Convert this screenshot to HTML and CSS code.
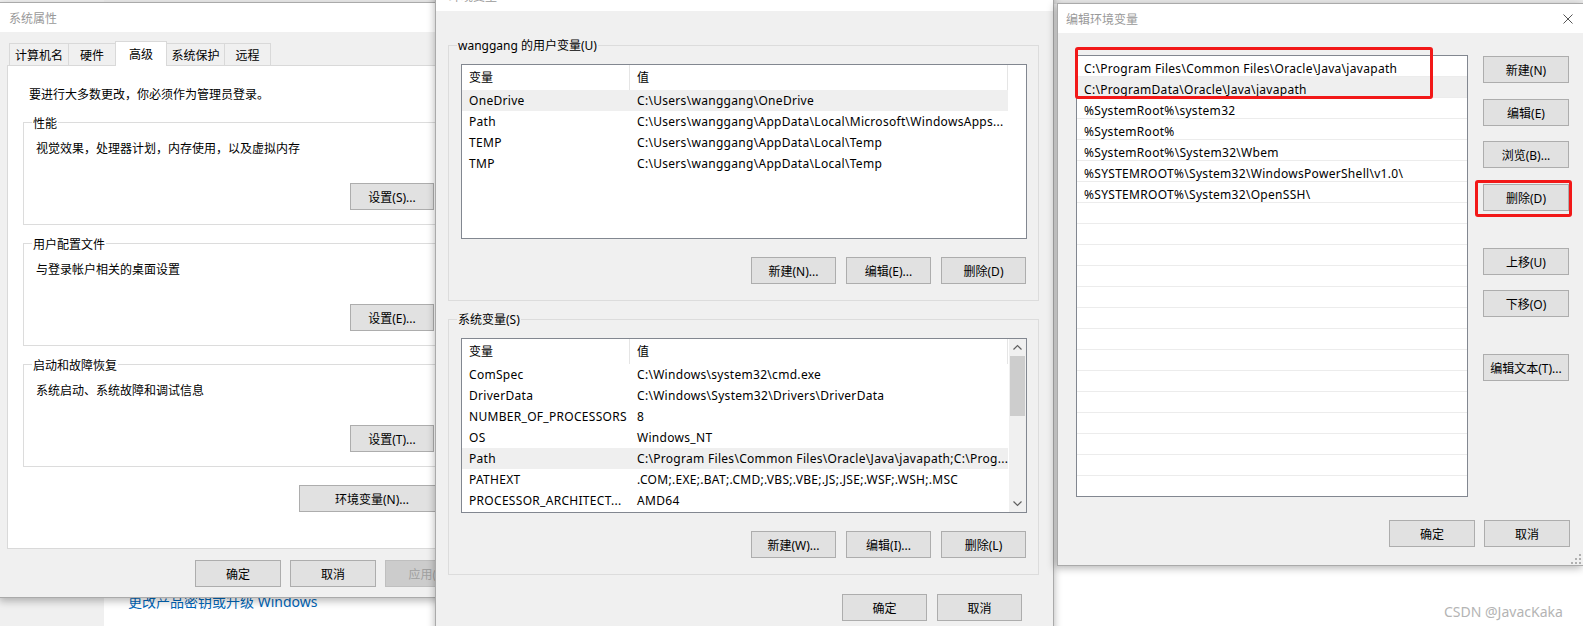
FILE: index.html
```html
<!DOCTYPE html>
<html lang="zh-CN">
<head>
<meta charset="utf-8">
<title>环境变量</title>
<link rel="stylesheet" href="styles.css">
</head>
<body>
<div class="desk">
  <div class="bg-top"></div>
  <div class="bg-nav"></div>
  <div class="bg-link">更改产品密钥或升级 Windows</div>
  <div class="watermark">CSDN @JavacKaka</div>

  <!-- 系统属性 -->
  <section class="win win-sys">
    <div class="titlebar sys-title">系统属性</div>
    <div class="sys-body">
      <div class="tabs">
        <div class="tab w60">计算机名</div>
        <div class="tab w48">硬件</div>
        <div class="tab sel w52">高级</div>
        <div class="tab w59">系统保护</div>
        <div class="tab w47">远程</div>
      </div>
      <div class="tabpanel">
        <p class="note">要进行大多数更改，你必须作为管理员登录。</p>
        <div class="group g-sys g-first">
          <span class="legend">性能</span>
          <p class="gdesc">视觉效果，处理器计划，内存使用，以及虚拟内存</p>
          <button class="btn">设置(S)...</button>
        </div>
        <div class="group g-sys">
          <span class="legend">用户配置文件</span>
          <p class="gdesc">与登录帐户相关的桌面设置</p>
          <button class="btn">设置(E)...</button>
        </div>
        <div class="group g-sys">
          <span class="legend">启动和故障恢复</span>
          <p class="gdesc">系统启动、系统故障和调试信息</p>
          <button class="btn">设置(T)...</button>
        </div>
        <button class="btn btn-envvar">环境变量(N)...</button>
      </div>
      <div class="footer sys-footer">
        <button class="btn">确定</button>
        <button class="btn">取消</button>
        <button class="btn disabled">应用(A)</button>
      </div>
    </div>
  </section>

  <!-- 环境变量 -->
  <section class="win win-env">
    <div class="titlebar env-title">环境变量</div>
    <div class="env-body">
      <div class="group g-env g-user">
        <span class="legend">wanggang 的用户变量(U)</span>
        <div class="lv">
          <div class="lv-main">
            <div class="lv-head"><span class="c1">变量</span><span class="c2">值</span></div>
            <div class="lv-row hl"><span class="c1">OneDrive</span><span class="c2">C:\Users\wanggang\OneDrive</span></div>
            <div class="lv-row"><span class="c1">Path</span><span class="c2">C:\Users\wanggang\AppData\Local\Microsoft\WindowsApps...</span></div>
            <div class="lv-row"><span class="c1">TEMP</span><span class="c2">C:\Users\wanggang\AppData\Local\Temp</span></div>
            <div class="lv-row"><span class="c1">TMP</span><span class="c2">C:\Users\wanggang\AppData\Local\Temp</span></div>
          </div>
        </div>
        <div class="btnrow">
          <button class="btn b85">新建(N)...</button>
          <button class="btn b85">编辑(E)...</button>
          <button class="btn b85">删除(D)</button>
        </div>
      </div>
      <div class="group g-env g-sysvar">
        <span class="legend">系统变量(S)</span>
        <div class="lv lv-sys">
          <div class="lv-main">
            <div class="lv-head"><span class="c1">变量</span><span class="c2">值</span></div>
            <div class="lv-row"><span class="c1">ComSpec</span><span class="c2">C:\Windows\system32\cmd.exe</span></div>
            <div class="lv-row"><span class="c1">DriverData</span><span class="c2">C:\Windows\System32\Drivers\DriverData</span></div>
            <div class="lv-row"><span class="c1">NUMBER_OF_PROCESSORS</span><span class="c2">8</span></div>
            <div class="lv-row"><span class="c1">OS</span><span class="c2">Windows_NT</span></div>
            <div class="lv-row hl"><span class="c1">Path</span><span class="c2">C:\Program Files\Common Files\Oracle\Java\javapath;C:\Prog...</span></div>
            <div class="lv-row"><span class="c1">PATHEXT</span><span class="c2">.COM;.EXE;.BAT;.CMD;.VBS;.VBE;.JS;.JSE;.WSF;.WSH;.MSC</span></div>
            <div class="lv-row"><span class="c1">PROCESSOR_ARCHITECT...</span><span class="c2">AMD64</span></div>
          </div>
          <div class="vscroll">
            <svg class="arr" viewBox="0 0 17 17"><polyline points="4.5,10.5 8.5,6.5 12.5,10.5"/></svg>
            <div class="track"><div class="thumb"></div></div>
            <svg class="arr" viewBox="0 0 17 17"><polyline points="4.5,6.5 8.5,10.5 12.5,6.5"/></svg>
          </div>
        </div>
        <div class="btnrow">
          <button class="btn b85">新建(W)...</button>
          <button class="btn b85">编辑(I)...</button>
          <button class="btn b85">删除(L)</button>
        </div>
      </div>
      <div class="env-footer">
        <button class="btn b85">确定</button>
        <button class="btn b85">取消</button>
      </div>
    </div>
  </section>

  <!-- 编辑环境变量 -->
  <section class="win win-edit">
    <div class="titlebar edit-title">
      <span>编辑环境变量</span>
      <span class="close"><svg viewBox="0 0 10 10"><line x1="0.5" y1="0.5" x2="9.5" y2="9.5"/><line x1="9.5" y1="0.5" x2="0.5" y2="9.5"/></svg></span>
    </div>
    <div class="edit-body">
      <div class="edit-main">
        <div class="plist">
          <div class="prow">C:\Program Files\Common Files\Oracle\Java\javapath</div>
          <div class="prow hl">C:\ProgramData\Oracle\Java\javapath</div>
          <div class="prow">%SystemRoot%\system32</div>
          <div class="prow">%SystemRoot%</div>
          <div class="prow">%SystemRoot%\System32\Wbem</div>
          <div class="prow">%SYSTEMROOT%\System32\WindowsPowerShell\v1.0\</div>
          <div class="prow">%SYSTEMROOT%\System32\OpenSSH\</div>
          <div class="prow"></div><div class="prow"></div><div class="prow"></div>
          <div class="prow"></div><div class="prow"></div><div class="prow"></div>
          <div class="prow"></div><div class="prow"></div><div class="prow"></div>
          <div class="prow"></div><div class="prow"></div><div class="prow"></div>
          <div class="prow"></div><div class="prow"></div>
        </div>
        <div class="pcol">
          <button class="btn">新建(N)</button>
          <button class="btn m16">编辑(E)</button>
          <button class="btn m15">浏览(B)...</button>
          <button class="btn m16">删除(D)</button>
          <button class="btn m37">上移(U)</button>
          <button class="btn m15">下移(O)</button>
          <button class="btn m37">编辑文本(T)...</button>
        </div>
      </div>
      <div class="edit-footer">
        <button class="btn">确定</button>
        <button class="btn">取消</button>
      </div>
    </div>
    <div class="redbox rb1"></div>
    <div class="redbox rb2"></div>
    <svg class="grip" viewBox="0 0 10 10"><rect x="8" y="0" width="2" height="2"/><rect x="8" y="4" width="2" height="2"/><rect x="4" y="4" width="2" height="2"/><rect x="8" y="8" width="2" height="2"/><rect x="4" y="8" width="2" height="2"/><rect x="0" y="8" width="2" height="2"/></svg>
  </section>
</div>
</body>
</html>
```

FILE: styles.css
```css
html, body { margin: 0; padding: 0; }
body {
  font-family: "Noto Sans", "Noto Sans CJK SC", sans-serif;
  font-size: 12px;
  color: #000;
  background: #fff;
}
p { margin: 0; }

.desk { position: relative; width: 1583px; height: 626px; overflow: hidden; background: #fff; }
.bg-top { position: absolute; left: 0; top: 0; width: 1583px; height: 4px; background: #ebebeb; }
.bg-nav { position: absolute; left: 0; top: 0; width: 104px; height: 626px; background: #f0f0f0; }
.bg-link { position: absolute; left: 128px; top: 594px; font-size: 14px; line-height: 16px; color: #0066b8; white-space: nowrap; }
.watermark { position: absolute; left: 1444px; top: 604px; font-size: 14px; line-height: 16px; color: #b4b4b4; white-space: nowrap; }

.win {
  position: absolute;
  box-sizing: border-box;
  border: 1px solid #aaaaaa;
  display: flex;
  flex-direction: column;
  background: #f0f0f0;
}
.titlebar { flex: none; background: #fff; color: #999; display: flex; align-items: center; white-space: nowrap; }

.btn {
  box-sizing: border-box;
  display: block;
  flex: none;
  height: 27px;
  width: 86px;
  margin: 0;
  padding: 0;
  border: 1px solid #adadad;
  background: #e1e1e1;
  font: inherit;
  color: #000;
  white-space: nowrap;
}
.b85 { width: 85px; }

/* ---------- group boxes ---------- */
.group { box-sizing: border-box; border: 1px solid #dcdcdc; display: flex; flex-direction: column; align-items: flex-start; flex: none; }
.legend { display: block; padding: 0 1px; line-height: 16px; background: inherit; white-space: nowrap; }

/* ---------- 系统属性 ---------- */
.win-sys { left: -1px; top: 2px; width: 479px; height: 596px; z-index: 1; box-shadow: 0 3px 8px rgba(0,0,0,.28); }
.sys-title { height: 29px; padding-left: 9px; }
.sys-body { flex: 1; padding: 9px 0 0 7px; display: flex; flex-direction: column; align-items: flex-start; }
.tabs { display: flex; align-items: flex-end; height: 25px; margin: 0 0 -1px 2px; position: relative; z-index: 1; }
.tab {
  box-sizing: border-box;
  height: 22px;
  margin: 0 -1px 1px 0;
  padding-top: 2px;
  border: 1px solid #d9d9d9;
  border-bottom: none;
  background: #f0f0f0;
  text-align: center;
  line-height: 19px;
  white-space: nowrap;
}
.tab.sel { height: 25px; margin-bottom: 0; background: #fff; line-height: 21px; position: relative; z-index: 2; }
.w60 { width: 60px; } .w48 { width: 48px; } .w52 { width: 52px; } .w59 { width: 59px; } .w47 { width: 47px; }
.tabpanel {
  box-sizing: border-box;
  width: 470px;
  height: 484px;
  border: 1px solid #d9d9d9;
  background: #fff;
  display: flex;
  flex-direction: column;
  align-items: flex-start;
}
.note { margin: 19px 0 0 21px; line-height: 20px; }
.g-sys { width: 431px; height: 103px; margin: 18px 0 0 15px; background: #fff; }
.g-sys.g-first { margin-top: 17px; }
.g-sys .legend { margin: -7px 0 0 8px; }
.gdesc { margin: 7px 0 0 12px; line-height: 20px; }
.g-sys .btn { width: 84px; margin: 24px 0 0 326px; }
.btn-envvar { width: 146px; margin: 18px 0 0 291px; }
.sys-footer { display: flex; gap: 9px; margin: 11px 0 0 188px; }
.btn.disabled { background: #cccccc; border-color: #bfbfbf; color: #a0a0a0; }

/* ---------- 环境变量 ---------- */
.win-env { left: 435px; top: -20px; width: 619px; height: 700px; z-index: 2; box-shadow: 0 0 8px rgba(0,0,0,.3); }
.env-title { height: 30px; padding-left: 13px; }
.env-body { flex: 1; padding-left: 12px; display: flex; flex-direction: column; align-items: flex-start; }
.g-env { width: 591px; height: 256px; background: #f0f0f0; }
.g-user { margin-top: 34px; }
.g-sysvar { margin-top: 18px; }
.g-env .legend { margin: -8px 0 0 8px; }
.lv {
  box-sizing: border-box;
  width: 566px;
  height: 175px;
  margin: 10px 0 0 12px;
  border: 1px solid #828790;
  background: #fff;
  overflow: hidden;
  display: flex;
  flex: none;
}
.lv-main { width: 546px; flex: none; }
.lv-head { display: flex; height: 25px; }
.lv-head span { box-sizing: border-box; border-right: 1px solid #e5e5e5; line-height: 25px; padding-left: 7px; }
.lv-row { display: flex; height: 21px; line-height: 21px; letter-spacing: 0.3px; }
.lv-row span { box-sizing: border-box; padding-left: 7px; white-space: nowrap; overflow: hidden; }
.c1 { width: 168px; flex: none; }
.c2 { width: 378px; flex: none; }
.hl { background: #efefef; }
.vscroll { width: 17px; margin-left: 1px; background: #f0f0f0; display: flex; flex-direction: column; flex: none; }
.arr { width: 17px; height: 17px; display: block; flex: none; }
.arr polyline { fill: none; stroke: #606060; stroke-width: 1.2; }
.track { flex: 1; }
.thumb { height: 60px; margin: 0 1px; background: #cdcdcd; }
.btnrow { display: flex; gap: 10px; align-self: flex-end; margin: 18px 12px 0 0; }
.env-footer { display: flex; gap: 10px; align-self: flex-end; margin: 19px 31px 0 0; }

/* ---------- 编辑环境变量 ---------- */
.win-edit { left: 1057px; top: 3px; width: 527px; height: 563px; z-index: 3; box-shadow: -2px 2px 8px rgba(0,0,0,.3); }
.edit-title { height: 29px; padding-left: 8px; }
.close { margin-left: auto; width: 30px; height: 29px; display: flex; align-items: center; justify-content: center; }
.close svg { width: 10px; height: 10px; display: block; }
.close line { stroke: #555; stroke-width: 1; }
.edit-body { flex: 1; display: flex; flex-direction: column; align-items: flex-start; }
.edit-main { display: flex; margin: 22px 0 0 18px; }
.plist {
  box-sizing: border-box;
  width: 392px;
  height: 442px;
  border: 1px solid #828790;
  background: #fff;
  overflow: hidden;
  flex: none;
}
.prow { box-sizing: border-box; height: 21px; line-height: 18px; padding: 4px 0 0 7px; border-bottom: 1px solid #ececec; white-space: nowrap; overflow: hidden; letter-spacing: 0.3px; }
.prow.hl { background: #efefef; }
.pcol { display: flex; flex-direction: column; margin-left: 15px; padding-top: 1px; }
.m15 { margin-top: 15px !important; }
.m16 { margin-top: 16px !important; }
.m37 { margin-top: 37px !important; }
.edit-footer { display: flex; gap: 9px; align-self: flex-end; margin: 23px 13px 0 0; }
.redbox { position: absolute; box-sizing: border-box; border: 3px solid #f21818; border-radius: 3px; }
.rb1 { left: 17px; top: 43px; width: 358px; height: 52px; }
.rb2 { left: 417px; top: 176px; width: 97px; height: 37px; }
.grip { position: absolute; right: 2px; bottom: 1px; width: 10px; height: 10px; }
.grip rect { fill: #b0b0b0; }
```
